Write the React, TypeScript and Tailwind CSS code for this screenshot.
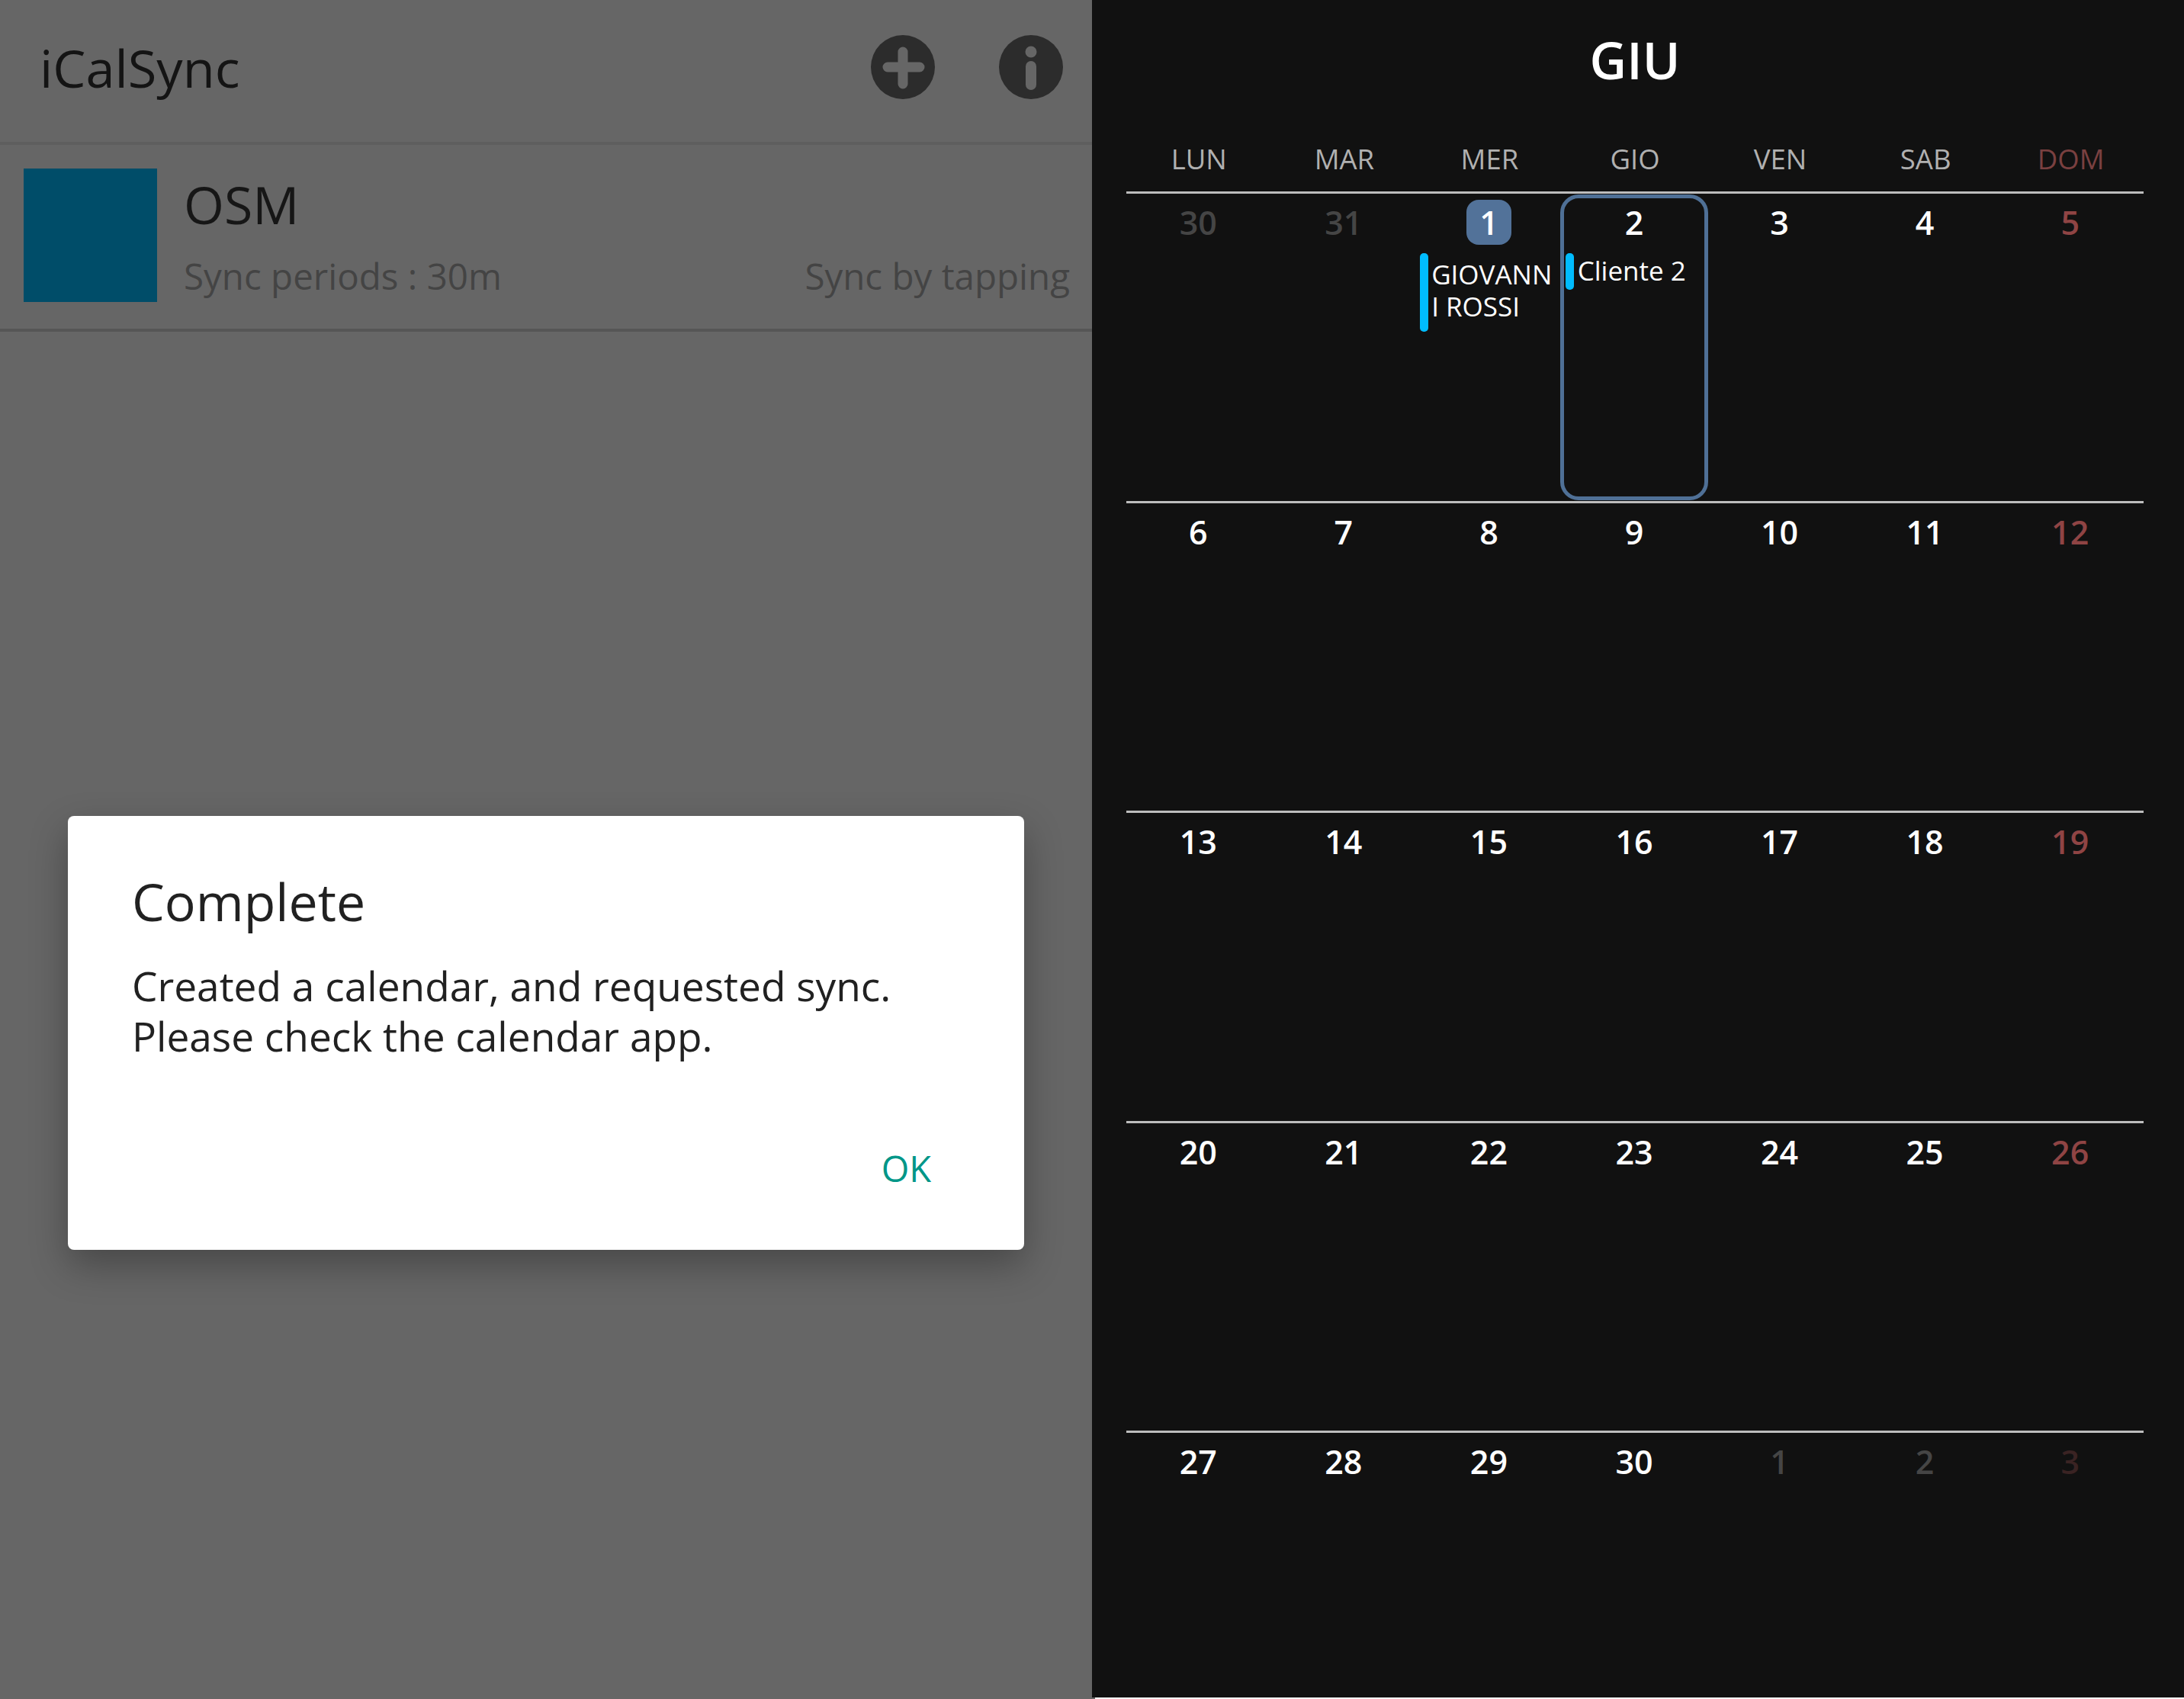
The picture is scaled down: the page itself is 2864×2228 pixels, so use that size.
const rows: { n: string; c: string }[][] = [
  [["30","d"],["31","d"],["1","t"],["2","w"],["3","w"],["4","w"],["5","r"]],
  [["6","w"],["7","w"],["8","w"],["9","w"],["10","w"],["11","w"],["12","r"]],
  [["13","w"],["14","w"],["15","w"],["16","w"],["17","w"],["18","w"],["19","r"]],
  [["20","w"],["21","w"],["22","w"],["23","w"],["24","w"],["25","w"],["26","r"]],
  [["27","w"],["28","w"],["29","w"],["30","w"],["1","d"],["2","d"],["3","x"]],
].map((r) => r.map(([n, c]) => ({ n, c })));

const dayColor: Record<string, string> = {
  w: "text-white",
  t: "text-white",
  d: "text-[#454545]",
  r: "text-[#8f4444]",
  x: "text-[#3a2323]",
};

const heads = ["LUN", "MAR", "MER", "GIO", "VEN", "SAB", "DOM"];

function Cell({ n, c, selected, event }: { n: string; c: string; selected?: boolean; event?: "a" | "b" }) {
  return (
    <div className="relative flex flex-col items-center pt-[8px] pr-[2px]">
      {selected && (
        <div className="absolute left-[-3px] top-[1px] w-[194px] h-[401px] rounded-[24px] border-[5px] border-[#4f7096]" />
      )}
      <div
        className={`w-[59px] h-[59px] flex items-center justify-center text-[43px] leading-[59px] font-semibold rounded-[16px] ${dayColor[c]} ${c === "t" ? "bg-[#527299]" : ""}`}
      >
        {n}
      </div>
      {event === "a" && (
        <div className="absolute left-[4px] top-[78px] flex gap-[4px] text-white text-[35px] leading-[42px]">
          <div className="w-[11px] h-[103px] rounded-[5px] bg-[#00bcff]" />
          <div className="pt-[7px] whitespace-nowrap">
            GIOVANN
            <br />I ROSSI
          </div>
        </div>
      )}
      {event === "b" && (
        <div className="absolute left-[4px] top-[78px] flex gap-[5px] text-white text-[35px] leading-[46px]">
          <div className="w-[11px] h-[48px] rounded-[5px] bg-[#00bcff]" />
          <div className="whitespace-nowrap">Cliente 2</div>
        </div>
      )}
    </div>
  );
}

export default function App() {
  return (
    <div className="w-[2864px] h-[2228px] flex items-start overflow-hidden bg-white font-['Open_Sans',sans-serif]">
      <div className="relative w-[1432px] h-[2228px] bg-[#666666]">
        <header className="h-[190px] flex items-center justify-between pl-[52px] pr-[38px] pb-[10px] border-b-[4px] border-[#5e5e5e]">
          <div className="text-[68.5px] leading-[90px] text-[#141414] mt-[2px]">iCalSync</div>
          <div className="flex gap-[84px]">
            <svg width="84" height="84" viewBox="0 0 84 84">
              <circle cx="42" cy="42" r="42" fill="#2c2c2c" />
              <path d="M42 22v42M22 42h42" stroke="#666666" strokeWidth="13" strokeLinecap="round" />
            </svg>
            <svg width="84" height="84" viewBox="0 0 84 84">
              <circle cx="42" cy="42" r="42" fill="#2c2c2c" />
              <circle cx="42" cy="22" r="7.5" fill="#666666" />
              <path d="M42 41v24" stroke="#666666" strokeWidth="14" strokeLinecap="round" />
            </svg>
          </div>
        </header>
        <div className="h-[245px] flex items-start pl-[31px] pr-[29px] pt-[31px] border-b-[4px] border-[#565656]">
          <div className="w-[175px] h-[175px] bg-[#004d69] shrink-0" />
          <div className="flex-1 ml-[35px] flex flex-col">
            <div className="text-[68px] leading-[90px] text-[#161616] mt-[2px]">OSM</div>
            <div className="flex justify-between text-[47.5px] leading-[70px] text-[#444444] mt-[14px]">
              <span>Sync periods : 30m</span>
              <span>Sync by tapping</span>
            </div>
          </div>
        </div>
        <div className="absolute left-[89px] top-[1070px] w-[1254px] h-[569px] bg-white rounded-[8px] shadow-[0_20px_50px_rgba(0,0,0,0.3)] flex flex-col pl-[84px] pr-[122px]">
          <div className="text-[68px] leading-[90px] text-[#212121] mt-[67px]">Complete</div>
          <div className="text-[53.2px] leading-[66px] text-[#212121] mt-[33px]">
            Created a calendar, and requested sync.
            <br />
            Please check the calendar app.
          </div>
          <div className="mt-auto mb-[75px] self-end text-[47px] leading-[64px] text-[#009688]">OK</div>
        </div>
        <div className="absolute left-full bottom-0 w-[4px] h-[2px] bg-[#666666]" />
      </div>
      <div className="w-[1432px] h-[2226px] bg-[#111111] pl-[45px] pr-[53px] flex flex-col overflow-hidden">
        <div className="h-[162px] shrink-0 pt-[29px] text-center text-white text-[67px] leading-[98px] font-semibold">GIU</div>
        <div className="h-[89px] shrink-0 pt-[15px] grid grid-cols-7 items-start">
          {heads.map((h, i) => (
            <div key={h} className={`text-center text-[36.5px] leading-[62px] font-medium ${i === 6 ? "text-[#7a4040]" : "text-[#b0b0b0]"}`}>
              {h}
            </div>
          ))}
        </div>
        {rows.map((row, r) => (
          <div key={r} className="h-[406.2px] grid grid-cols-7 border-t-[3px] border-[#bdbdbd] shrink-0">
            {row.map((d, i) => (
              <Cell
                key={i}
                n={d.n}
                c={d.c}
                selected={r === 0 && i === 3}
                event={r === 0 && i === 2 ? "a" : r === 0 && i === 3 ? "b" : undefined}
              />
            ))}
          </div>
        ))}
      </div>
    </div>
  );
}
